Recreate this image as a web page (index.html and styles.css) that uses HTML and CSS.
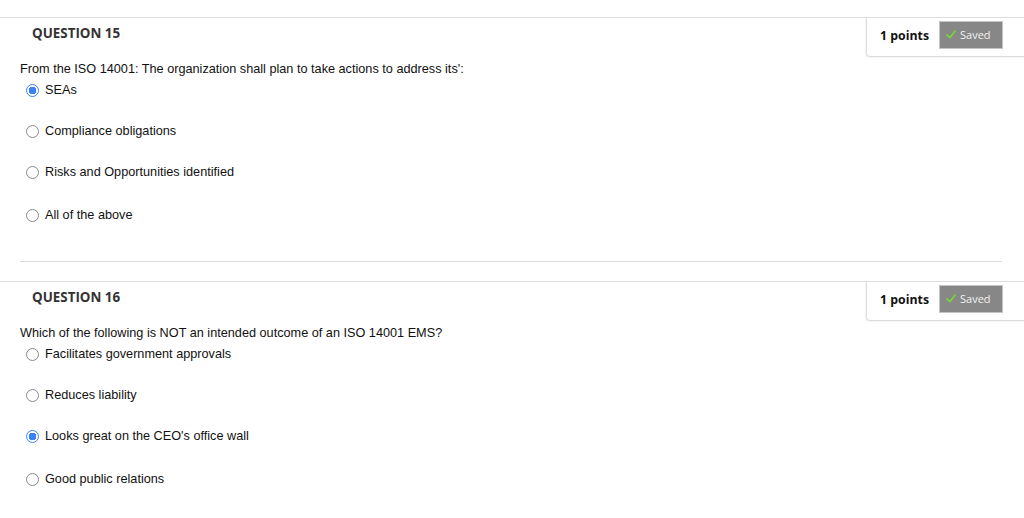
FILE: index.html
```html
<!DOCTYPE html>
<html>
<head>
<meta charset="utf-8">
<link rel="stylesheet" href="styles.css">
</head>
<body>
<div class="page">
  <section class="question">
    <div class="q-header">
      <h3 class="q-title">QUESTION 15</h3>
      <div class="points">
        <span class="points-label">1 points</span>
        <span class="saved"><svg class="check" width="10" height="9" viewBox="0 0 10 9"><path d="M1 5 L3.8 7.6 L9 1.2" fill="none" stroke="#7cd13a" stroke-width="1.8" stroke-linecap="round" stroke-linejoin="round"/></svg>Saved</span>
      </div>
    </div>
    <p class="q-text">From the ISO 14001: The organization shall plan to take actions to address its':</p>
    <ul class="options">
      <li class="option"><span class="radio checked"></span><span class="label">SEAs</span></li>
      <li class="option"><span class="radio"></span><span class="label">Compliance obligations</span></li>
      <li class="option"><span class="radio"></span><span class="label">Risks and Opportunities identified</span></li>
      <li class="option last"><span class="radio"></span><span class="label">All of the above</span></li>
    </ul>
    <hr class="sep">
  </section>
  <section class="question">
    <div class="q-header">
      <h3 class="q-title">QUESTION 16</h3>
      <div class="points">
        <span class="points-label">1 points</span>
        <span class="saved"><svg class="check" width="10" height="9" viewBox="0 0 10 9"><path d="M1 5 L3.8 7.6 L9 1.2" fill="none" stroke="#7cd13a" stroke-width="1.8" stroke-linecap="round" stroke-linejoin="round"/></svg>Saved</span>
      </div>
    </div>
    <p class="q-text">Which of the following is NOT an intended outcome of an ISO 14001 EMS?</p>
    <ul class="options">
      <li class="option"><span class="radio"></span><span class="label">Facilitates government approvals</span></li>
      <li class="option"><span class="radio"></span><span class="label">Reduces liability</span></li>
      <li class="option"><span class="radio checked"></span><span class="label">Looks great on the CEO's office wall</span></li>
      <li class="option last"><span class="radio"></span><span class="label">Good public relations</span></li>
    </ul>
  </section>
</div>
</body>
</html>
```

FILE: styles.css
```css
* { box-sizing: border-box; }
html, body {
  margin: 0;
  padding: 0;
  background: #fff;
}
body {
  font-family: "Liberation Sans", Arial, sans-serif;
  color: #111;
  font-size: 12.7px;
}
.page {
  padding-top: 17px;
}
.question {
  border-top: 1px solid #dcdcdc;
}
.q-header {
  display: flex;
  justify-content: space-between;
  align-items: flex-start;
  height: 39px;
}
.q-title {
  margin: 0;
  padding: 7px 0 0 32px;
  font-family: "Open Sans", sans-serif;
  font-weight: 700;
  font-size: 13.4px;
  line-height: 16px;
  color: #333;
}
.points {
  display: flex;
  align-items: center;
  gap: 10px;
  height: 39px;
  padding: 3px 21px 8px 13px;
  border-left: 1px solid #dcdcdc;
  border-bottom: 1px solid #dcdcdc;
  border-bottom-left-radius: 4px;
  box-shadow: -1px 1px 1px rgba(0,0,0,0.04);
}
.points-label {
  font-family: "Open Sans", sans-serif;
  font-weight: 700;
  font-size: 12.3px;
  color: #111;
  padding-top: 1px;
}
.saved {
  display: flex;
  align-items: center;
  gap: 4px;
  width: 64px;
  height: 28px;
  padding-left: 6px;
  background: #878787;
  border: 1px solid #c4c4c4;
  font-family: "Open Sans", sans-serif;
  font-size: 11px;
  color: #f2f2f2;
}
.check {
  display: block;
}
.q-text {
  margin: 4px 0 0 0;
  padding-left: 20px;
  line-height: 16px;
}
.options {
  list-style: none;
  margin: 5px 0 0 0;
  padding: 0 0 0 26px;
}
.option {
  display: flex;
  align-items: center;
  height: 16px;
  margin-bottom: 25px;
}
.option.last {
  margin-top: 27px;
  margin-bottom: 0;
}
.radio {
  width: 13px;
  height: 13px;
  border-radius: 50%;
  border: 1px solid #8a8a8a;
  background: #fff;
  flex: none;
}
.radio.checked {
  border: 1.5px solid #3b82f6;
  background: radial-gradient(circle, #3b82f6 0 3.6px, #fff 4px);
}
.label {
  margin-left: 6px;
  line-height: 16px;
}
.sep {
  margin: 38px 22px 19px 20px;
  border: 0;
  border-top: 1px solid #dcdcdc;
  height: 0;
}
```
